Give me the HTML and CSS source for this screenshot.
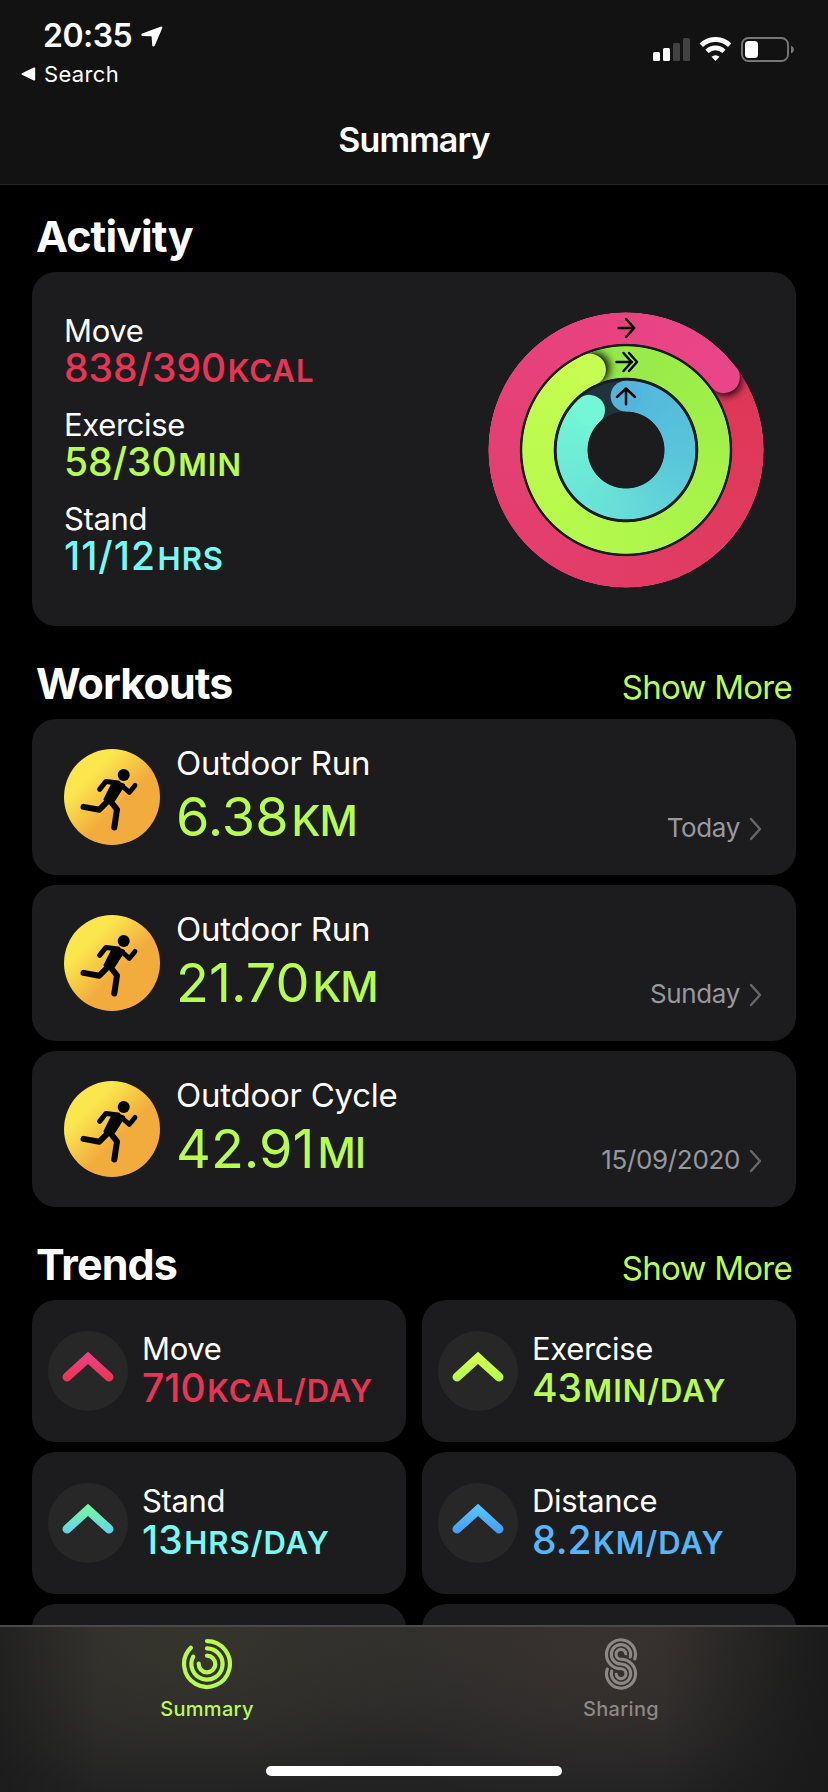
FILE: index.html
```html
<!DOCTYPE html>
<html lang="en">
<head>
<meta charset="utf-8">
<title>Summary</title>
<link rel="stylesheet" href="styles.css">
</head>
<body>
<svg width="0" height="0" class="defs" aria-hidden="true">
  <defs>
    <symbol id="runner" viewBox="0 0 96 96">
      <g fill="none" stroke="#000" stroke-linecap="round" stroke-linejoin="round">
        <circle cx="59.7" cy="26" r="6" fill="#000" stroke="none"/>
        <path d="M54 34 42 32.400 35.600 40.400" stroke-width="5"/>
        <path d="M57 36 65.3 43.4 71 36.4" stroke-width="4.800"/>
        <path d="M45.500 50.500 35.300 60.700 19.500 57.900" stroke-width="6"/>
        <path d="M46 51.500 53 60.500 50.300 78.500" stroke-width="6"/>
        <path d="M49.500 33.500 59.500 36 50 51 45 53 41 50.500Z" fill="#000" stroke-width="3"/>
      </g>
    </symbol>
  </defs>
</svg>
<div class="app">
  <header class="header">
    <div class="status">
      <div class="status-left">
        <div class="clock"><span>20:35</span>
          <svg class="location" width="22" height="21" viewBox="0 0 22 21"><path d="M20.200.5 1.200 7.600C-.2 8.200.1 9.800 1.500 9.900L10 10.300C10.500 10.300 10.700 10.500 10.700 11L11.200 19.200C11.300 20.700 13 20.900 13.700 19.700L21.300 2C21.700.9 21 .2 20.200.5Z" fill="#fff"/></svg>
        </div>
        <div class="back">
          <svg width="15" height="14" viewBox="0 0 15 14"><path d="M1 6.200 12.800.6Q14.200.2 14.200 1.600V12.400Q14.200 13.800 12.800 13.400L1 7.800Q-.2 7 1 6.200Z" fill="#fff"/></svg>
          <span>Search</span>
        </div>
      </div>
      <svg class="status-icons" width="142" height="26" viewBox="0 0 142 26">
        <rect x="0" y="15" width="7" height="9" rx="1.500" fill="#fff"/>
        <rect x="10" y="11" width="7" height="13" rx="1.500" fill="#fff"/>
        <rect x="20" y="6" width="7" height="18" rx="1.500" fill="#424242"/>
        <rect x="30" y="1" width="7" height="23" rx="1.500" fill="#424242"/>
        <g fill="none" stroke="#fff">
          <path d="M48.300 8.200A20.500 20.500 0 0 1 76.700 8.200" stroke-width="5"/>
          <path d="M54 14.300A12.200 12.200 0 0 1 71 14.300" stroke-width="4.600"/>
        </g>
        <path d="M58.500 19.700A6 6 0 0 1 66.500 19.700L62.500 24Z" fill="#fff"/>
        <rect x="89" y="1" width="46" height="23" rx="6.500" fill="none" stroke="#777" stroke-width="1.900"/>
        <rect x="92" y="4" width="13" height="17" rx="3.500" fill="#fff"/>
        <path d="M138 8.500Q141 10 141 12.500T138 16.500Z" fill="#777"/>
      </svg>
    </div>
    <h1 class="title">Summary</h1>
  </header>

  <main class="content">
    <div class="section-head"><h2>Activity</h2></div>
    <section class="card activity">
      <div class="stats">
        <div class="stat"><div class="label">Move</div><div class="value move">838/390<small>KCAL</small></div></div>
        <div class="stat"><div class="label">Exercise</div><div class="value exercise">58/30<small>MIN</small></div></div>
        <div class="stat"><div class="label">Stand</div><div class="value stand wide">11/12<small>HRS</small></div></div>
      </div>
      <div class="rings">
        <div class="ring ring-move"></div>
        <div class="ring ring-exercise"></div>
        <div class="ring ring-stand"></div>
        <svg class="ring-marks" width="276" height="276" viewBox="-138 -138 276 276">
          <defs>
            <filter id="soft" x="-50%" y="-50%" width="200%" height="200%"><feGaussianBlur stdDeviation="4.500"/></filter>
            <clipPath id="move-ring"><path clip-rule="evenodd" d="M0-137.700A137.700 137.700 0 1 1 0 137.700A137.700 137.700 0 1 1 0-137.700ZM0-106.200A106.200 106.200 0 1 0 0 106.200A106.200 106.200 0 1 0 0-106.200Z"/></clipPath>
            <clipPath id="exercise-ring"><path clip-rule="evenodd" d="M0-103.700A103.700 103.700 0 1 1 0 103.700A103.700 103.700 0 1 1 0-103.700ZM0-72.300A72.300 72.300 0 1 0 0 72.300A72.300 72.300 0 1 0 0-72.300Z"/></clipPath>
            <clipPath id="ahead"><rect x="0" y="-140" width="60" height="140"/></clipPath>
          </defs>
          <g transform="rotate(53.500)">
            <g clip-path="url(#move-ring)"><g clip-path="url(#ahead)"><circle cx="3" cy="-122" r="15.500" filter="url(#soft)"/></g></g>
            <circle cx="0" cy="-122" r="15.700" fill="#ea4589"/>
          </g>
          <g transform="rotate(-24)">
            <g clip-path="url(#exercise-ring)"><g clip-path="url(#ahead)"><circle cx="4" cy="-88" r="15.500" filter="url(#soft)"/></g></g>
            <circle cx="0" cy="-88" r="15.700" fill="#c6fd50"/>
          </g>
          <circle cx="0" cy="-53.900" r="15.400" fill="#53b5de"/>
          <circle cx="0" cy="-53.900" r="15.400" fill="#73f7d6" transform="rotate(-42.500)"/>
          <g fill="none" stroke="#000" stroke-width="2.500" stroke-linecap="round" stroke-linejoin="round">
            <path d="M-7.400-122H8M0-131 8.200-122 0-113"/>
            <path d="M-9.400-88H6M-2.500-97 5.500-88-2.500-79M3-97 11-88 3-79"/>
            <path d="M0-45.800V-61.500M-9-53 0-61.500 9-53"/>
          </g>
        </svg>
      </div>
    </section>

    <div class="section-head"><h2>Workouts</h2><a class="more">Show More</a></div>
    <section class="workouts">
      <article class="card workout">
        <div class="badge"><svg width="96" height="96"><use href="#runner"/></svg></div>
        <div class="workout-text"><div class="name">Outdoor Run</div><div class="distance">6.38<small>KM</small></div></div>
        <div class="when"><span>Today</span><svg width="13" height="24" viewBox="0 0 13 24"><path d="M2 2 11 12 2 22"/></svg></div>
      </article>
      <article class="card workout">
        <div class="badge"><svg width="96" height="96"><use href="#runner"/></svg></div>
        <div class="workout-text"><div class="name">Outdoor Run</div><div class="distance">21.70<small>KM</small></div></div>
        <div class="when"><span>Sunday</span><svg width="13" height="24" viewBox="0 0 13 24"><path d="M2 2 11 12 2 22"/></svg></div>
      </article>
      <article class="card workout">
        <div class="badge"><svg width="96" height="96"><use href="#runner"/></svg></div>
        <div class="workout-text"><div class="name">Outdoor Cycle</div><div class="distance">42.91<small>MI</small></div></div>
        <div class="when"><span>15/09/2020</span><svg width="13" height="24" viewBox="0 0 13 24"><path d="M2 2 11 12 2 22"/></svg></div>
      </article>
    </section>

    <div class="section-head"><h2>Trends</h2><a class="more">Show More</a></div>
    <section class="trends">
      <article class="card trend">
        <svg class="arrow" width="80" height="80" viewBox="0 0 80 80"><defs><linearGradient id="g1" gradientUnits="userSpaceOnUse" x1="0" y1="22" x2="0" y2="50"><stop stop-color="#ea4589"/><stop offset="1" stop-color="#ee3350"/></linearGradient></defs><path d="M19 46 40 26.900 61 46" stroke="url(#g1)"/></svg>
        <div><div class="label">Move</div><div class="value move">710<small>KCAL/DAY</small></div></div>
      </article>
      <article class="card trend">
        <svg class="arrow" width="80" height="80" viewBox="0 0 80 80"><defs><linearGradient id="g2" gradientUnits="userSpaceOnUse" x1="0" y1="22" x2="0" y2="50"><stop stop-color="#d8fe4f"/><stop offset="1" stop-color="#b5fb4c"/></linearGradient></defs><path d="M19 46 40 26.900 61 46" stroke="url(#g2)"/></svg>
        <div><div class="label">Exercise</div><div class="value exercise">43<small>MIN/DAY</small></div></div>
      </article>
      <article class="card trend">
        <svg class="arrow" width="80" height="80" viewBox="0 0 80 80"><defs><linearGradient id="g3" gradientUnits="userSpaceOnUse" x1="0" y1="22" x2="0" y2="50"><stop stop-color="#78fa9c"/><stop offset="1" stop-color="#60d5ee"/></linearGradient></defs><path d="M19 46 40 26.900 61 46" stroke="url(#g3)"/></svg>
        <div><div class="label">Stand</div><div class="value stand">13<small>HRS/DAY</small></div></div>
      </article>
      <article class="card trend">
        <svg class="arrow" width="80" height="80" viewBox="0 0 80 80"><defs><linearGradient id="g4" gradientUnits="userSpaceOnUse" x1="0" y1="22" x2="0" y2="50"><stop stop-color="#5ac8fa"/><stop offset="1" stop-color="#459cf7"/></linearGradient></defs><path d="M19 46 40 26.900 61 46" stroke="url(#g4)"/></svg>
        <div><div class="label">Distance</div><div class="value distance-color">8.2<small>KM/DAY</small></div></div>
      </article>
      <article class="card trend"></article>
      <article class="card trend"></article>
    </section>
  </main>

  <nav class="tabbar">
    <div class="tabs">
      <a class="tab active">
        <svg width="54" height="54" viewBox="-27 -27 54 54" fill="none" stroke="currentColor" stroke-width="4.200" stroke-linecap="round">
          <path d="M0-22.900A22.900 22.900 0 1 1-16.200-16.200"/>
          <path d="M0-15.600A15.600 15.600 0 1 1-13.800-7.300"/>
          <path d="M0-8.300A8.300 8.300 0 1 1-8.300-.3"/>
        </svg>
        <span>Summary</span>
      </a>
      <a class="tab">
        <svg width="34" height="54" viewBox="0 0 34 54" fill="none" stroke="currentColor" stroke-width="3.100" stroke-linecap="round">
          <path d="M30.700 22A14.500 14.500 0 1 0 17 31.800A4.900 4.900 0 1 1 12.200 37.200"/>
          <path d="M26.300 20A9.700 9.700 0 1 0 17 27A9.700 9.700 0 1 1 7.700 34"/>
          <path d="M21.800 16.800A4.900 4.900 0 1 0 17 22.200A14.500 14.500 0 1 1 3.300 32"/>
        </svg>
        <span>Sharing</span>
      </a>
    </div>
    <div class="home-bar"></div>
  </nav>
</div>
</body>
</html>
```
FILE: styles.css
```css
* { box-sizing: border-box; }
body { margin: 0; background: #000; color: #fff; font-family: Inter, "Liberation Sans", sans-serif; }
h1, h2 { margin: 0; }
svg { display: block; flex: none; }
.defs { position: absolute; }

.app { width: 828px; height: 1792px; display: flex; flex-direction: column; overflow: hidden; }

.header { flex: none; height: 185px; background: #121212; border-bottom: 1px solid #262626; }
.status { display: flex; justify-content: space-between; height: 88px; padding: 16px 33px 0 21px; }
.clock { display: flex; align-items: center; gap: 9px; height: 40px; padding-left: 22px; font-size: 32px; font-weight: 600; line-height: 40px; letter-spacing: -.5px; }
.back { display: flex; align-items: center; gap: 8px; height: 28px; margin-top: 4px; font-size: 22px; line-height: 28px; letter-spacing: .35px; }
.status-icons { margin-top: 21px; }
.title { margin-top: 30px; font-size: 34px; font-weight: 600; line-height: 44px; text-align: center; letter-spacing: -.9px; }

.content { flex: 1; min-height: 0; overflow: hidden; padding: 26px 32px 0; }
.section-head { display: flex; justify-content: space-between; align-items: baseline; height: 52px; margin-bottom: 9px; padding: 0 4px; }
.section-head h2 { font-size: 43px; font-weight: 700; line-height: 50px; letter-spacing: -.9px; }
.more { font-size: 33px; line-height: 40px; color: #b8fc50; letter-spacing: -.75px; }
.card { background: #1c1c1e; border-radius: 24px; }

.activity { display: flex; justify-content: space-between; height: 354px; margin-bottom: 32px; padding: 41px 32px 0; }
.stats { display: flex; flex-direction: column; gap: 19px; }
.label { font-size: 31px; line-height: 35px; letter-spacing: -.35px; white-space: nowrap; }
.value { font-size: 39px; line-height: 40px; font-weight: 500; white-space: nowrap; }
.value small { margin-left: 1.500px; font-size: 31px; line-height: 1; font-weight: 600; letter-spacing: 1px; }
.wide { letter-spacing: 1px; }
.move { color: #e93555; }
.exercise { color: #b8fc50; }
.stand { color: #76fbf4; }
.distance-color { color: #54b7fa; }

.rings { display: grid; width: 276px; height: 276px; margin-top: -1px; }
.ring, .ring-marks { grid-area: 1 / 1; }
.ring-marks { z-index: 1; }
.ring { width: 276px; height: 276px; border-radius: 50%; }
.ring-move {
  background: conic-gradient(from 53.5deg, #de3755, #e23d69 40%, #ea4589);
  mask: radial-gradient(circle, transparent 105.800px, #000 106.600px, #000 137.300px, transparent 138px);
}
.ring-exercise {
  background: conic-gradient(from -24deg, #94e848, #a4f24a 35%, #b2f84c 60%, #c6fd50);
  mask: radial-gradient(circle, transparent 71.900px, #000 72.700px, #000 103.300px, transparent 104.100px);
}
.ring-stand {
  background: conic-gradient(#53b5de, #5ac6da 28%, #67ded8 52%, #73f7d6 88.200%, #20333b 88.200%);
  mask: radial-gradient(circle, transparent 38.100px, #000 38.900px, #000 68.900px, transparent 69.700px);
}

.workouts { display: flex; flex-direction: column; gap: 10px; margin-bottom: 32px; }
.workout { display: flex; height: 156px; padding: 0 34px 0 32px; }
.badge { flex: none; width: 96px; height: 96px; margin-top: 30px; border-radius: 50%; background: linear-gradient(135deg, #fbe64e 28%, #f2ab3d 58%); }
.workout-text { flex: 1; padding: 24px 0 0 16px; }
.name { font-size: 33px; line-height: 40px; letter-spacing: -.25px; }
.distance { margin-top: 4px; font-size: 54px; line-height: 60px; color: #b8fc50; white-space: nowrap; }
.distance small { margin-left: 3px; font-size: 42px; line-height: 1; font-weight: 500; letter-spacing: -1px; }
.when { display: flex; align-self: flex-end; align-items: center; gap: 9px; margin-bottom: 31px; font-size: 26px; line-height: 32px; letter-spacing: -.35px; color: #98989f; }
.when svg { margin-top: 2px; fill: none; stroke: #68686c; stroke-width: 2.400; stroke-linecap: round; stroke-linejoin: round; }

.trends { display: grid; grid-template-columns: 1fr 1fr; gap: 10px 16px; }
.trend { display: flex; gap: 14px; height: 142px; padding: 31px 16px 0; }
.trend .value { margin-top: 2px; }
.arrow { border-radius: 50%; background: #272727; fill: none; stroke-width: 9; stroke-linecap: round; }

.tabbar {
  flex: none; height: 167px; border-top: 2px solid #4a4a4b;
  display: flex; flex-direction: column; justify-content: space-between; align-items: center; padding-bottom: 16px;
  background:
    linear-gradient(90deg, rgba(24,24,24,.6), transparent 12%, transparent 80%, rgba(24,24,24,.9)),
    radial-gradient(ellipse 300px 150px at 190px 20px, #35342c, transparent),
    radial-gradient(ellipse 300px 160px at 600px 20px, #38322f, transparent),
    linear-gradient(#2e2e2e, #222223);
}
.tabs { display: grid; grid-template-columns: 1fr 1fr; width: 100%; padding-top: 10px; }
.tab { display: flex; flex-direction: column; align-items: center; gap: 6px; color: #8b8886; font-size: 20px; font-weight: 500; line-height: 24px; letter-spacing: .3px; }
.tab.active { color: #b8fc50; }
.home-bar { width: 296px; height: 10px; border-radius: 5px; background: #fff; }
```
